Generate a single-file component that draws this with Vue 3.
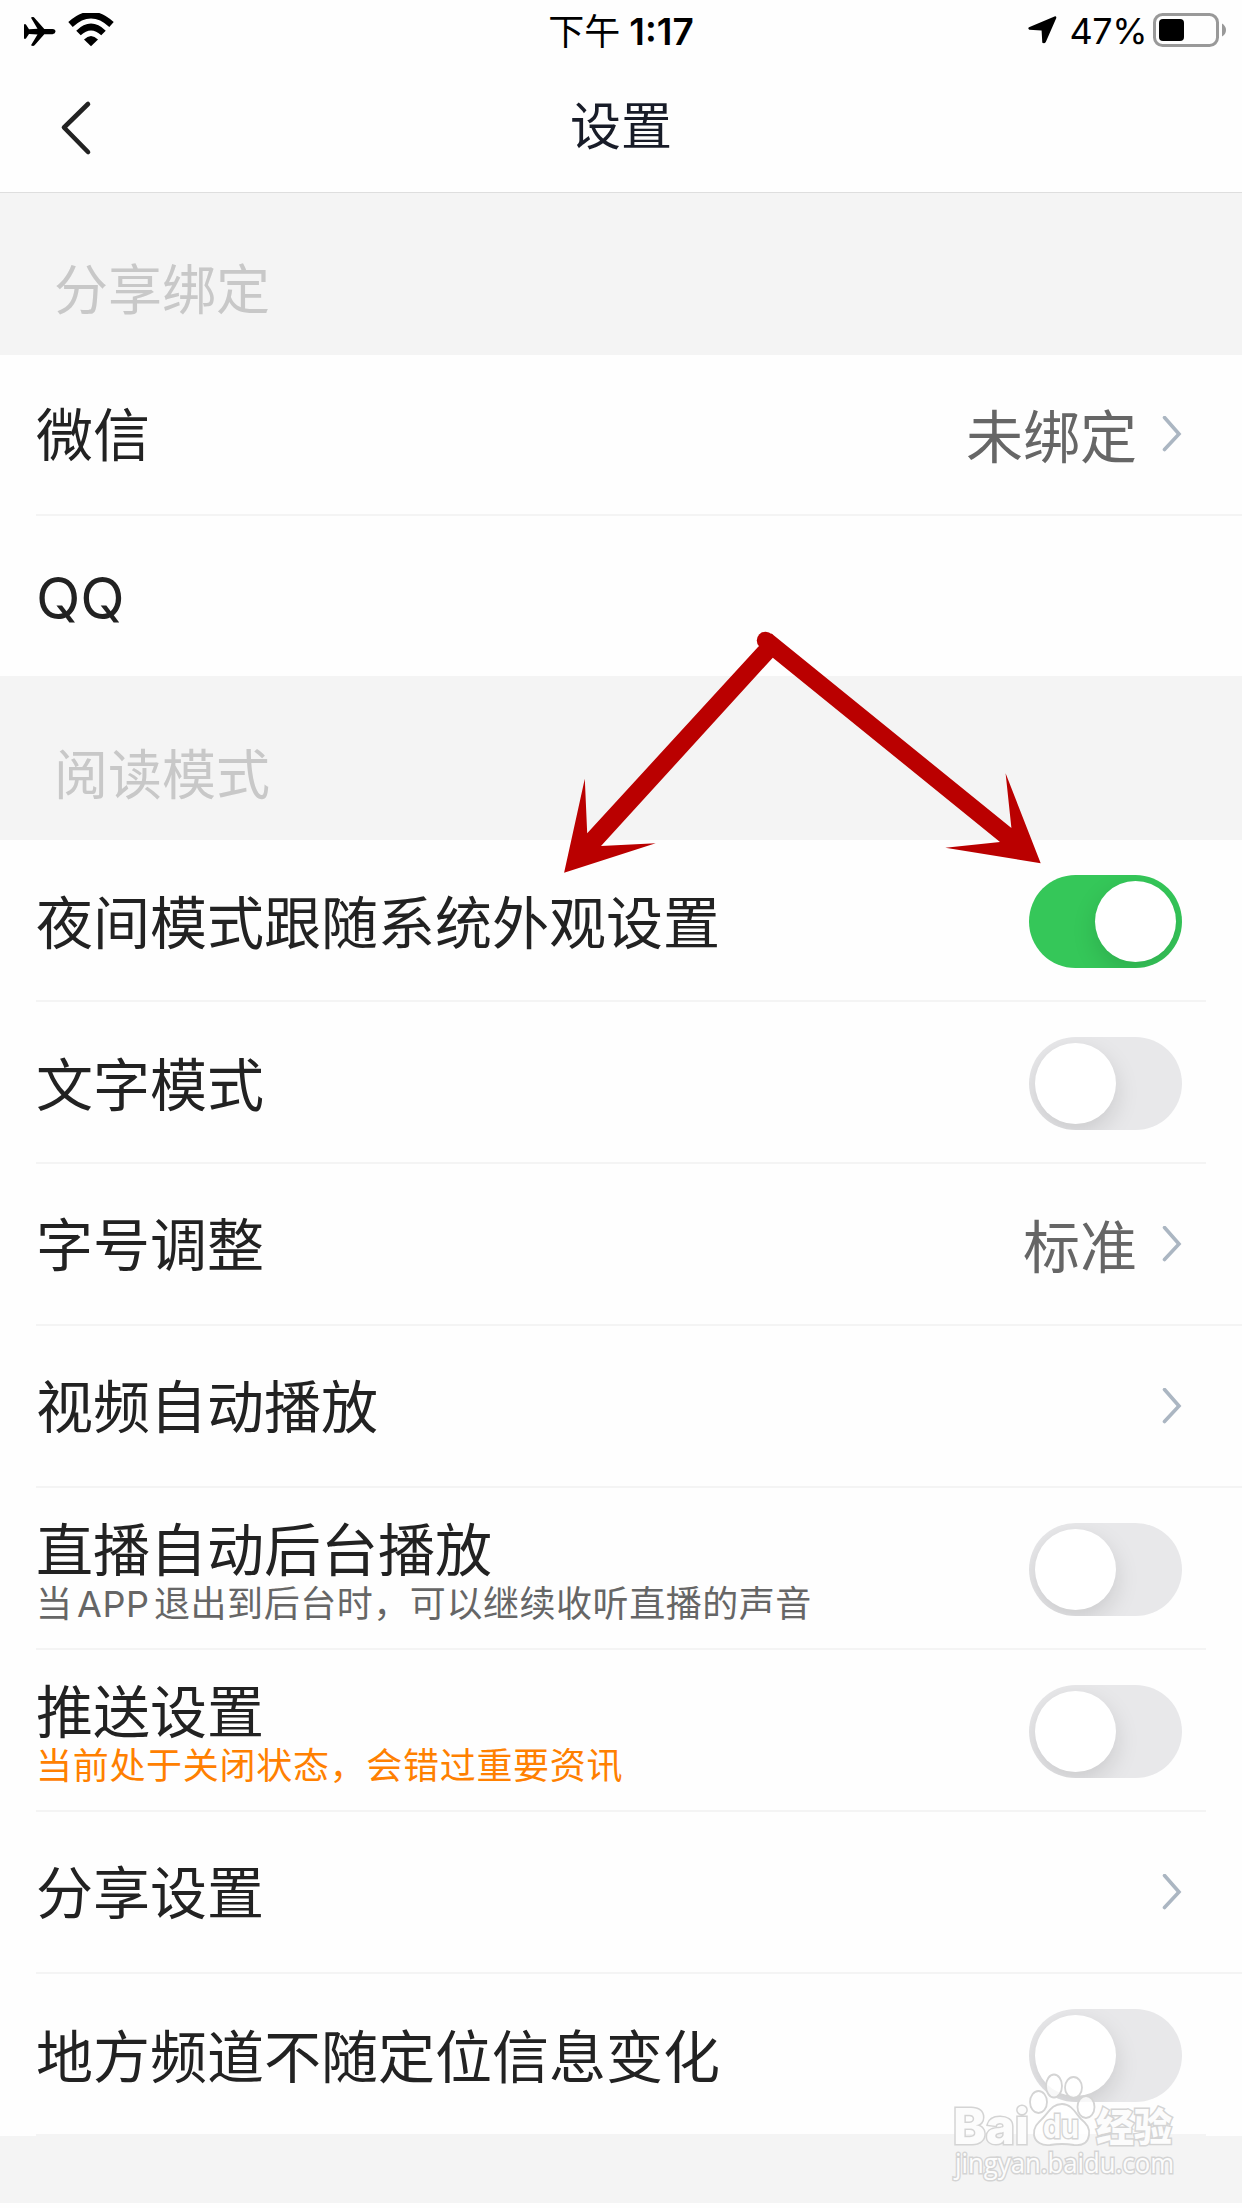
<template>
  <div class="page">
    <header class="header">
      <div class="status-bar">
        <div class="status-left">
          <svg class="plane" width="32" height="30" viewBox="0 0 32 30">
            <path d="M0 7.200h1.800L5 12.200l8.500-.4L7 .8Q7.500 0 9 .1q1 .1 1.800 1.100L20.300 12H28.500Q31.500 12.400 31.500 14.500T28.500 17.200H20.300L10.800 28q-.8.9-1.800.900T7 28.300L13.500 17.400 5 17 1.800 21.800H0z" />
          </svg>
          <svg class="wifi" width="46" height="34" viewBox="0 0 46 34">
            <path d="M2.500 11.500Q23-7.500 43.500 11.500M10.500 20Q23 8 35.500 20" fill="none" stroke="#000" stroke-width="6.500" />
            <path d="M16 26.500Q23 19.500 30 26.500L23 33.300z" />
          </svg>
        </div>
        <div class="time">下午 <b>1:17</b></div>
        <div class="status-right">
          <svg width="29" height="28" viewBox="0 0 29 28">
            <path d="M1 11.200 26.500.4Q28.800 0 28.200 2.300L17.800 26Q16.500 28 14.300 26.800L13.600 14.500 1.300 13.700Q-.5 12.500 1 11.200z" />
          </svg>
          <span class="percent">47%</span>
          <svg width="74" height="34" viewBox="0 0 74 34">
            <rect x="1.500" y="1.500" width="63" height="31" rx="8" fill="none" stroke="#999" stroke-width="3" />
            <rect x="6" y="6" width="25" height="22" rx="4" />
            <path d="M69 10.500q4 2.500 4 6.500t-4 6.500z" fill="#999" />
          </svg>
        </div>
      </div>
      <div class="nav">
        <svg class="back" width="32" height="56" viewBox="0 0 32 56">
          <path d="M28 4 4 27.500 28 52" fill="none" stroke="#222" stroke-width="4.600" stroke-linecap="round" stroke-linejoin="round" />
        </svg>
        <h1>设置</h1>
      </div>
    </header>

    <section v-for="group in groups" :key="group.title">
      <h2 class="group-title">{{ group.title }}</h2>
      <div v-for="item in group.items" :key="item.label" class="row" :class="item.type">
        <div class="texts" :class="{ double: item.desc }">
          <div class="label">{{ item.label }}</div>
          <div v-if="item.desc" class="desc" :class="{ warn: item.warn }">{{ item.desc }}</div>
        </div>
        <span v-if="item.value" class="value">{{ item.value }}</span>
        <svg v-if="item.type === 'link'" class="arrow" width="20" height="36" viewBox="0 0 20 36">
          <path d="M2.500 1.500 17 18 2.500 33.500" fill="none" stroke="#abb6c2" stroke-width="3.600" stroke-linecap="round" />
        </svg>
        <button v-if="item.type === 'toggle'" class="switch" :class="{ on: item.on }" @click="item.on = !item.on">
          <span class="knob"></span>
        </button>
      </div>
    </section>
    <div class="footer"></div>

    <svg class="pointer" width="1242" height="2208" viewBox="0 0 1242 2208">
      <circle cx="765.6" cy="640.5" r="8.800" />
      <path d="M758 647 587.200 833.300 584.800 778.700 564.100 872.700 655.700 843.300 601 846 772.800 657.700 1000 842 945.300 847.700 1040.700 863.300 1005.600 773.300 1011.400 828 771.500 633.500z" />
    </svg>

    <svg class="watermark" width="240" height="136" viewBox="944 2070 240 136">
      <g class="mark">
        <ellipse cx="1038.500" cy="2102" rx="8.500" ry="11" />
        <ellipse cx="1054" cy="2086" rx="8" ry="11.500" />
        <ellipse cx="1073.500" cy="2087.500" rx="8.500" ry="10.500" />
        <ellipse cx="1086" cy="2107" rx="8.500" ry="11" />
        <path d="M1062 2104c10 0 14 10 19 15 6 5 9 9 8 16-1 8-7 11-15 10q-12-2-24 0c-8 1-15-3-16-10-1-8 4-12 9-17 6-6 9-14 19-14z" />
        <text x="953" y="2143.500" font-size="49" font-weight="800" textLength="76" lengthAdjust="spacingAndGlyphs">Bai</text>
        <text x="1043" y="2138" font-size="32" font-weight="700" textLength="36" lengthAdjust="spacingAndGlyphs">du</text>
        <text x="1096" y="2141" font-size="39" font-weight="900" textLength="76" lengthAdjust="spacingAndGlyphs">经验</text>
        <text class="url" x="955" y="2173" font-size="27" textLength="219" lengthAdjust="spacingAndGlyphs">jingyan.baidu.com</text>
      </g>
    </svg>
  </div>
</template>

<script setup>
import { ref } from 'vue'

const groups = ref([
  {
    title: '分享绑定',
    items: [
      { label: '微信', type: 'link', value: '未绑定' },
      { label: 'QQ', type: 'plain' }
    ]
  },
  {
    title: '阅读模式',
    items: [
      { label: '夜间模式跟随系统外观设置', type: 'toggle', on: true },
      { label: '文字模式', type: 'toggle', on: false },
      { label: '字号调整', type: 'link', value: '标准' },
      { label: '视频自动播放', type: 'link' },
      { label: '直播自动后台播放', type: 'toggle', on: false, desc: '当APP退出到后台时，可以继续收听直播的声音' },
      { label: '推送设置', type: 'toggle', on: false, desc: '当前处于关闭状态，会错过重要资讯', warn: true },
      { label: '分享设置', type: 'link' },
      { label: '地方频道不随定位信息变化', type: 'toggle', on: false }
    ]
  }
])
</script>

<style>
body {
  margin: 0;
  background: #fff;
}
</style>

<style scoped>
.page {
  position: relative;
  width: 1242px;
  height: 2208px;
  overflow: hidden;
  background: #fefefe;
  color: #222;
  font-family: Inter, "Noto Sans CJK SC", sans-serif;
}
.header {
  height: 192px;
  border-bottom: 1px solid #dedede;
}
.status-bar {
  display: grid;
  grid-template-columns: 1fr auto 1fr;
  height: 60px;
  padding: 0 15px 0 24px;
  color: #000;
}
.status-left {
  display: flex;
  align-items: flex-start;
}
.plane {
  margin-top: 17px;
}
.wifi {
  margin: 13px 0 0 12px;
}
.time {
  padding-top: 14px;
  margin-right: 9px;
  font-size: 36px;
  line-height: 36px;
  font-weight: 400;
}
.time b {
  margin-left: -1px;
  font-size: 37px;
  font-weight: 600;
}
.status-right {
  display: flex;
  justify-content: flex-end;
  align-items: center;
}
.percent {
  margin: 2px 6px 0 13px;
  font-size: 36px;
  line-height: 36px;
  letter-spacing: -0.5px;
}
.nav {
  display: flex;
  align-items: center;
  height: 132px;
}
.back {
  margin: 4px 0 0 60px;
}
h1 {
  flex: 1;
  margin: 2px 92px 0 0;
  text-align: center;
  font-size: 51px;
  line-height: 60px;
  font-weight: 400;
  color: #181c28;
}
.group-title {
  box-sizing: border-box;
  height: 162px;
  margin: 0;
  padding: 64px 0 0 54px;
  background: #f4f4f4;
  color: #c8c8c8;
  font-size: 54px;
  line-height: 68px;
  font-weight: 400;
}
section:first-of-type .group-title {
  margin-bottom: -1px;
}
.row {
  position: relative;
  display: flex;
  align-items: center;
  box-sizing: border-box;
  height: 162px;
  padding: 0 60px 0 36px;
}
/* divider runs to the edge, except under switches */
.row::after {
  content: '';
  position: absolute;
  left: 36px;
  right: 0;
  bottom: 0;
  height: 2px;
  background: #f4f4f4;
}
.row.toggle::after {
  right: 36px;
}
.row.plain::after {
  left: 0;
}
.texts {
  flex: 1;
  padding-top: 1px;
}
.toggle .texts {
  padding-top: 5px;
}
.toggle .texts.double {
  padding-top: 9px;
}
.label {
  font-size: 57px;
  line-height: 60px;
}
.plain .label {
  font-size: 58px;
}
.desc {
  margin-top: 1px;
  font-size: 36px;
  line-height: 44px;
  letter-spacing: 0.55px;
  color: #666;
  text-autospace: normal;
}
.desc.warn {
  color: #ff8000;
  letter-spacing: 0.7px;
}
.value {
  margin-right: 24px;
  padding-top: 5px;
  font-size: 57px;
  line-height: 60px;
  color: #666;
}
.arrow {
  margin: 0 0 2px 1px;
}
.switch {
  width: 153px;
  height: 93px;
  padding: 6px;
  border: 0;
  border-radius: 47px;
  background: #e8e8ea;
  overflow: hidden;
}
.switch.on {
  background: #35c759;
}
.knob {
  display: block;
  width: 81px;
  height: 81px;
  border-radius: 50%;
  background: #fff;
  box-shadow: 0 9px 24px rgba(0, 0, 0, 0.13);
}
.switch.on .knob {
  margin-left: auto;
}
.footer {
  height: 67px;
  background: #f4f4f4;
}
.pointer {
  position: absolute;
  left: 0;
  top: 0;
  fill: #ba0000;
  pointer-events: none;
}
.watermark {
  position: absolute;
  left: 944px;
  top: 2070px;
  pointer-events: none;
}
.mark {
  fill: rgba(255, 255, 255, 0.8);
  stroke: #d4d4d4;
  stroke-width: 1.8px;
}
.mark text {
  font-family: Inter, "Noto Sans CJK SC", sans-serif;
  fill: #fcfcfc;
  stroke-width: 3px;
  paint-order: stroke;
}
.mark .url {
  font-family: "Open Sans", sans-serif;
}
</style>
